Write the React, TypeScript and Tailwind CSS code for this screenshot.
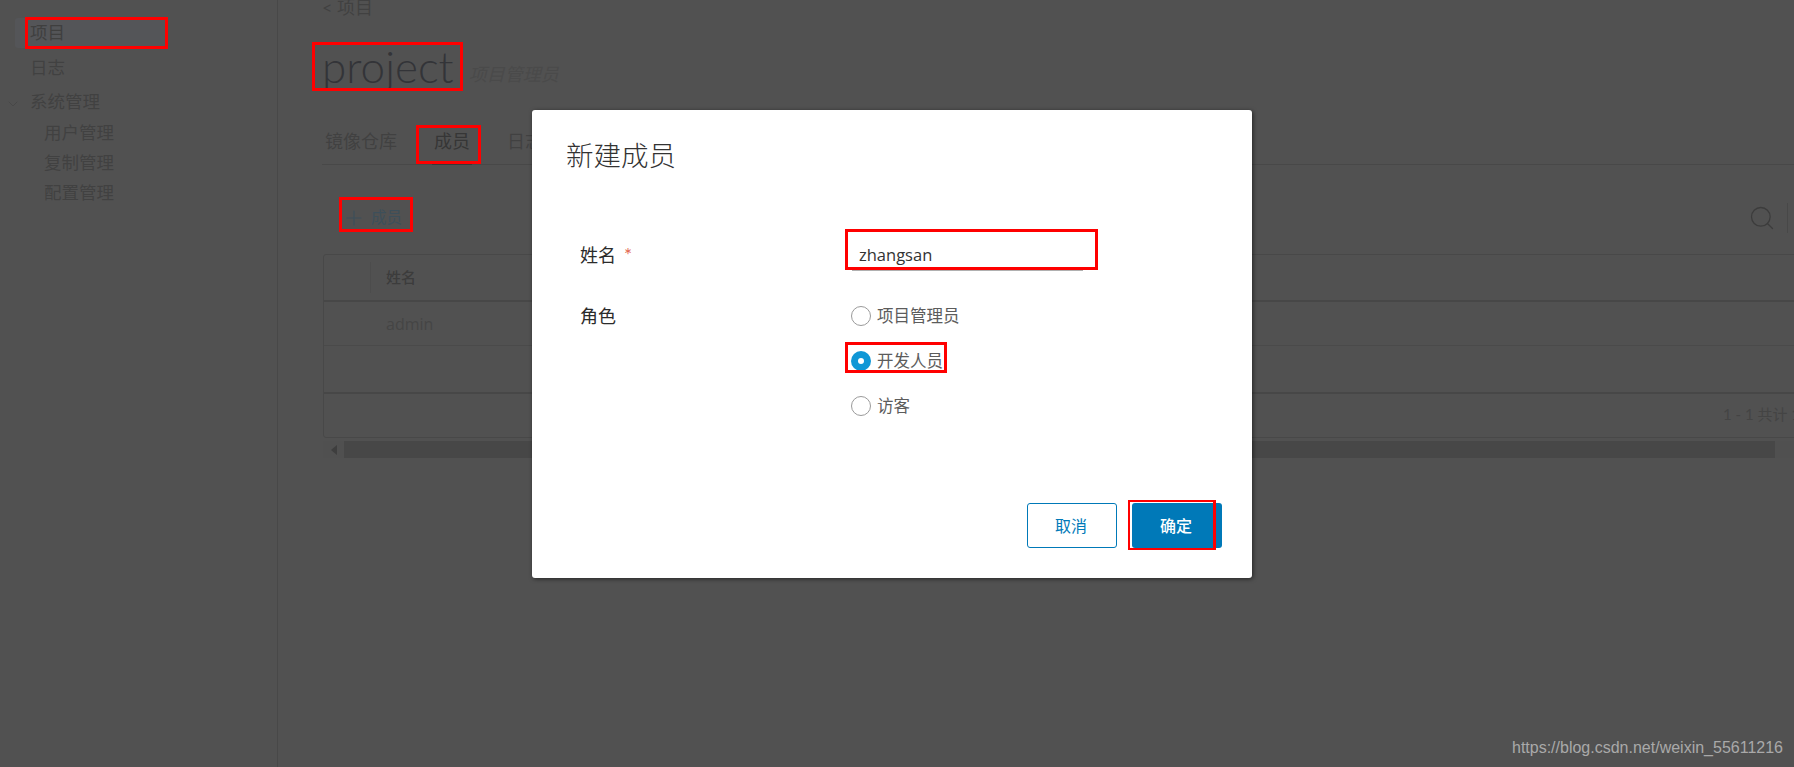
import { ChevronDown, Plus, Search } from "lucide-react";
import React from "react";

const RedBox = ({ className }: { className: string }) => (
  <div className={`absolute border-[#ff0000] ${className}`} />
);

const Radio = ({ label, checked }: { label: string; checked?: boolean }) => (
  <div className="flex h-[20px] items-center gap-[6px]">
    {checked ? (
      <span className="flex h-[20px] w-[20px] items-center justify-center rounded-full bg-[#0f97d6]">
        <span className="h-[6px] w-[6px] rounded-full bg-white" />
      </span>
    ) : (
      <span className="h-[20px] w-[20px] rounded-full border border-[#9a9a9a] bg-white" />
    )}
    <span className="text-[16.5px] leading-[20px] text-[#5c5c5c]">{label}</span>
  </div>
);

const App = () => {
  return (
    <div className="relative flex h-[767px] w-[1794px] overflow-hidden bg-[#515151] font-['Lato','Noto_Sans_CJK_SC',sans-serif]">
      <aside className="h-full w-[278px] shrink-0 border-r border-[#484848] pt-[18px] text-[17.5px] leading-[30px] text-[#3f3f3f]">
        <div className="ml-[15px] h-[30px] w-[150px] rounded-l-[3px] bg-[#545558] pl-[15px]">项目</div>
        <div className="mt-[5px] pl-[30px] text-[#414141]">日志</div>
        <div className="relative mt-[4px] pl-[30px] text-[#414141]">
          <ChevronDown className="absolute left-[5px] top-[9px] h-[16px] w-[16px] text-[#474747]" strokeWidth={1.4} />
          系统管理
        </div>
        <div className="mt-[1px] flex flex-col pl-[44px] text-[#414141]">
          <span>用户管理</span>
          <span>复制管理</span>
          <span>配置管理</span>
        </div>
      </aside>

      <main className="min-w-0 flex-1 pl-[44px]">
        <div className="-mt-[3px] h-[20px] text-[18px] leading-[20px] text-[#414141]">&lt; 项目</div>
        <div className="mt-[24px] flex h-[50px] items-center">
          <h1 className="text-[44px] font-light leading-[50px] text-[#333438]">project</h1>
          <span className="ml-[15px] mt-[16px] text-[18px] italic text-[#4a4a4a]">项目管理员</span>
        </div>
        <div className="mt-[39px] flex h-[35px] w-[1600px] gap-[37px] border-b border-[#484848] pl-[3px] text-[18px] leading-[22px] text-[#414141]">
          <span>镜像仓库</span>
          <span className="relative text-[#363636]">
            成员
            <span className="absolute -left-[2px] -right-[2px] top-[33px] h-[2px] bg-[#383838]" />
          </span>
          <span>日志</span>
        </div>
        <div className="mt-[41px] flex h-[24px] items-center pl-[20px] text-[#3d4f5a]">
          <Plus className="h-[24px] w-[24px]" strokeWidth={1.2} />
          <span className="ml-[5px] text-[15.5px]">成员</span>
          <div className="ml-[1346px] flex items-center gap-[11px]">
            <Search className="h-[28px] w-[28px] text-[#3c3c3c]" strokeWidth={1.1} />
            <span className="h-[30px] w-px bg-[#484848]" />
          </div>
        </div>
        <div className="ml-[1px] mt-[24px] w-[1600px] rounded-[3px] border border-[#484848]">
          <div className="flex h-[47px] items-center border-b-2 border-[#474747] text-[15px] font-medium text-[#3c3c3c]">
            <span className="h-[31px] w-[47px] border-r border-[#4c4c4c]" />
            <span className="ml-[15px]">姓名</span>
          </div>
          <div className="flex h-[44px] items-center border-b border-[#4a4a4a] pl-[62px] font-['Open_Sans',sans-serif] text-[16px] text-[#454545]">
            admin
          </div>
          <div className="h-[48px] border-b-2 border-[#474747]" />
          <div className="flex h-[43px] items-center pb-[2px] pl-[1399px] text-[15px] text-[#444444]">
            <span className="whitespace-nowrap">1 - 1 共计 1 条记录</span>
          </div>
        </div>
        <div className="ml-[1px] mt-[3px] flex h-[17px] w-[1600px] items-center bg-[#505050]">
          <span className="ml-[8px] h-0 w-0 border-y-[5px] border-r-[6px] border-y-transparent border-r-[#3e3e3e]" />
          <span className="ml-[7px] h-[17px] w-[1431px] bg-[#474747]" />
        </div>
      </main>

      <div className="absolute left-[532px] top-[110px] flex h-[468px] w-[720px] flex-col rounded-[3px] bg-white pb-[30px] pl-[34px] pr-[30px] pt-[29px] shadow-[1px_1px_4px_rgba(0,0,0,0.55)]">
        <h2 className="text-[27.5px] font-light leading-[34px] text-[#333333]">新建成员</h2>
        <div className="mt-[67px] grid grid-cols-[272px_1fr] pl-[14px]">
          <div className="flex h-[31px] items-center text-[18px] text-[#2b2b2b]">
            姓名
            <span className="ml-[8px] text-[19px] text-[#e2664e]">*</span>
          </div>
          <div className="h-[31px] w-[231px] border-b border-[#b0b0b0] pl-[7px] font-['Open_Sans',sans-serif] text-[16.5px] leading-[30px] text-[#333333]">
            zhangsan
          </div>
          <div className="mt-[33px] text-[18px] leading-[24px] text-[#2b2b2b]">角色</div>
          <div className="-ml-[1px] mt-[35px] flex flex-col gap-[25px]">
            <Radio label="项目管理员" />
            <Radio label="开发人员" checked />
            <Radio label="访客" />
          </div>
        </div>
        <div className="mt-auto flex justify-end gap-[15px] text-[16px]">
          <button className="h-[45px] w-[90px] rounded-[3px] border border-[#0079b8] pr-[2px] text-[#0079b8]">取消</button>
          <button className="h-[45px] w-[90px] rounded-[3px] bg-[#0079b8] pr-[2px] font-medium text-white">确定</button>
        </div>
      </div>

      <div className="absolute bottom-[9px] right-[11px] font-['Liberation_Sans',sans-serif] text-[16px] leading-[20px] text-[#a9a9a9]">
        https://blog.csdn.net/weixin_55611216
      </div>

      <RedBox className="left-[25px] top-[17px] h-[32px] w-[143px] border-[3px]" />
      <RedBox className="left-[312px] top-[42px] h-[49px] w-[151px] border-[3px]" />
      <RedBox className="left-[416px] top-[125px] h-[39px] w-[65px] border-[3px]" />
      <RedBox className="left-[339px] top-[197px] h-[35px] w-[74px] border-[3px]" />
      <RedBox className="left-[845px] top-[229px] h-[41px] w-[253px] border-[3px]" />
      <RedBox className="left-[845px] top-[342px] h-[31px] w-[102px] border-[3px]" />
      <RedBox className="left-[1128px] top-[500px] h-[50px] w-[88px] border-2 border-r-[3px]" />
    </div>
  );
};

export default App;
